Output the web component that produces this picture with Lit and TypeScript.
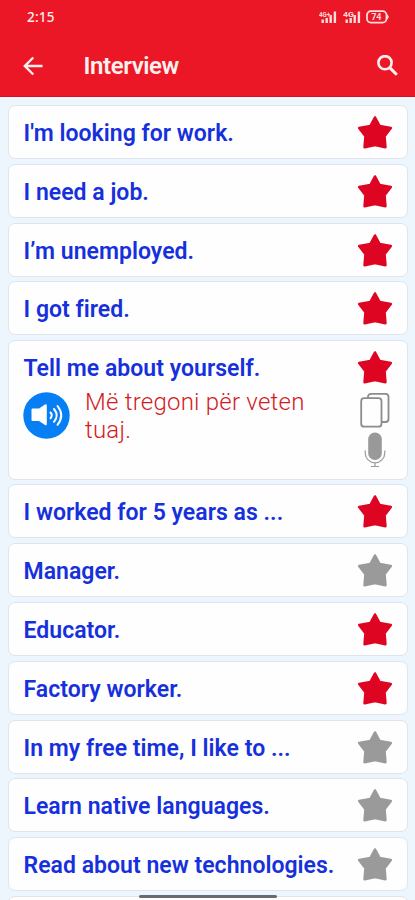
import { LitElement, html, svg, css } from "lit";
import { customElement, property } from "lit/decorators.js";
import { classMap } from "lit/directives/class-map.js";

interface Phrase {
  text: string;
  starred: boolean;
  translation?: string;
}

const PHRASES: Phrase[] = [
  { text: "I'm looking for work.", starred: true },
  { text: "I need a job.", starred: true },
  { text: "I’m unemployed.", starred: true },
  { text: "I got fired.", starred: true },
  { text: "Tell me about yourself.", starred: true, translation: "Më tregoni për veten tuaj." },
  { text: "I worked for 5 years as ...", starred: true },
  { text: "Manager.", starred: false },
  { text: "Educator.", starred: true },
  { text: "Factory worker.", starred: true },
  { text: "In my free time, I like to ...", starred: false },
  { text: "Learn native languages.", starred: false },
  { text: "Read about new technologies.", starred: false },
  { text: "", starred: false },
];

const signal = (label: string) => html`
  <svg width="18" height="14" viewBox="0 0 18 14" fill="#ffdcda">
    <text x="0" y="6.5" font-size="7" font-weight="700" textLength="11" lengthAdjust="spacingAndGlyphs">${label}</text>
    ${[
      [2.5, 9.5],
      [6.5, 8],
      [10.5, 5],
      [14.7, 1.5],
    ].map(([x, y]) => svg`<rect x=${x} y=${y} width="2.4" height=${13 - y} />`)}
  </svg>
`;

@customElement("phrase-card")
export class PhraseCard extends LitElement {
  @property({ attribute: false }) phrase!: Phrase;

  static styles = css`
    :host {
      display: block;
    }
    .card {
      box-sizing: border-box;
      display: flex;
      justify-content: space-between;
      height: 54px;
      padding: 8px 14px 0 14.5px;
      border: 1.5px solid #dfe5ea;
      border-radius: 7px;
      background: #fefefe;
    }
    .card.open {
      height: 139.5px;
    }
    .main {
      min-width: 0;
    }
    .text {
      margin-top: 6px;
      font-size: 23px;
      line-height: 28px;
      font-weight: 600;
      letter-spacing: 0.03px;
      color: #1630dc;
      white-space: nowrap;
    }
    .detail {
      display: flex;
      gap: 15px;
      margin-top: 6px;
    }
    .detail svg {
      flex: none;
      margin: 3px 0 0 -0.5px;
    }
    .translation {
      width: 240px;
      font-size: 24px;
      line-height: 28px;
      font-weight: 350;
      letter-spacing: 0.23px;
      color: #d31a22;
      margin-top: -1px;
    }
    .actions {
      display: flex;
      flex-direction: column;
      align-items: center;
      width: 36px;
      flex: none;
    }
    .actions svg {
      flex: none;
    }
    .star {
      fill: #9a9a9a;
      stroke: #9a9a9a;
    }
    .star.on {
      fill: #de0523;
      stroke: #de0523;
    }
    .copy {
      margin-top: 6.5px;
    }
    .mic {
      margin-top: 3.5px;
    }
  `;

  render() {
    const { text, starred, translation } = this.phrase;
    return html`
      <div class=${classMap({ card: true, open: !!translation })}>
        <div class="main">
          <div class="text">${text}</div>
          ${translation
            ? html`<div class="detail">
                <svg width="47" height="47" viewBox="0 0 47 47">
                  <circle cx="23.5" cy="23.5" r="23.2" fill="#067ff5" />
                  <path d="M9.5 16.5h6.5l6-4q1.8-1 1.8 1v18.5q0 2-1.8 1l-6-4h-6.5q-1 0-1-1v-10.500q0-1 1-1z" fill="#fff" />
                  <path
                    d="M27.500 20.500q2.500 2.800 0 5.800M31 17q5.400 6.400 0 12.800M34.500 14q7.500 9.400 0 18.800"
                    fill="none"
                    stroke="#fff"
                    stroke-width="2"
                    stroke-linecap="round"
                  />
                </svg>
                <div class="translation">${translation}</div>
              </div>`
            : null}
        </div>
        <div class="actions">
          <svg class=${classMap({ star: true, on: starred })} width="36" height="36" viewBox="0 0 36 36">
            <path
              d="M18 3.500L22.600 12L33.800 14L27.500 22.200L28.400 33.200L18 31L7.600 33.200L8.500 22.200L2.200 14L13.400 12Z"
              stroke-width="2.6"
              stroke-linejoin="round"
            />
          </svg>
          ${translation
            ? html`<svg class="copy" width="30" height="37" viewBox="0 0 30 37" fill="#fefefe" stroke="#8c8c8c" stroke-width="1.8">
                  <rect x="8" y="1.8" width="20.5" height="28.2" rx="3" />
                  <rect x="1.2" y="6.2" width="20.3" height="28.5" rx="3" />
                </svg>
                <svg class="mic" width="22" height="36" viewBox="0 0 22 36" fill="none" stroke="#9a9a9a">
                  <rect x="4.2" y="0.5" width="13.6" height="27.5" rx="6.8" fill="#999" stroke="none" />
                  <path d="M1.2 18.500v2.500a9.8 9.8 0 0 0 19.6 0v-2.500M11 31v3M7 34.500h8" stroke-width="1.2" />
                </svg>`
            : null}
        </div>
      </div>
    `;
  }
}

@customElement("app-root")
export class AppRoot extends LitElement {
  static styles = css`
    :host {
      display: block;
      position: relative;
      height: 900px;
      overflow: hidden;
      background: #eef6fd;
      font-family: Roboto, "Liberation Sans", sans-serif;
    }
    .header {
      height: 97px;
      background: #eb1726;
      color: #fff0ee;
      box-sizing: border-box;
      border-bottom: 1px solid #d8101f;
    }
    .status {
      display: flex;
      align-items: center;
      height: 34px;
      padding: 0 25px 0 27px;
    }
    .time {
      flex: 1;
      font-family: "Noto Sans", sans-serif;
      font-size: 13.5px;
      font-weight: 500;
      letter-spacing: 0.2px;
    }
    .icons {
      display: flex;
      align-items: center;
      gap: 5.5px;
    }
    .bar {
      display: flex;
      align-items: center;
      height: 64px;
      padding: 0 16px 0 22px;
    }
    .title {
      flex: 1;
      margin-left: 39.5px;
      font-size: 24px;
      font-weight: 600;
      letter-spacing: -0.4px;
    }
    .list {
      display: flex;
      flex-direction: column;
      gap: 4.8px;
      padding: 8px 7px 0 8px;
    }
    .handle {
      position: absolute;
      left: 139px;
      bottom: 2px;
      width: 138px;
      height: 3px;
      border-radius: 2px;
      background: #666b70;
    }
  `;

  render() {
    return html`
      <div class="header">
        <div class="status">
          <span class="time">2:15</span>
          <div class="icons">
            ${signal("4G+")}${signal("4G")}
            <svg width="24" height="14" viewBox="0 0 24 14">
              <rect x="1" y="1.2" width="19.5" height="11.4" rx="3.8" fill="none" stroke="#ffdcda" stroke-width="1.8" />
              <path d="M21.3 4.8q2 2.1 0 4.2z" fill="#ffdcda" stroke="#ffdcda" />
              <text x="5.2" y="10.3" font-size="9" font-weight="700" fill="#ffdcda">74</text>
            </svg>
          </div>
        </div>
        <div class="bar">
          <svg width="22" height="22" viewBox="0 0 22 22" fill="none" stroke="#fff0ee" stroke-width="2.4">
            <path d="M20.5 11H3.2M11.3 2.5L2.8 11l8.5 8.5" />
          </svg>
          <span class="title">Interview</span>
          <svg width="23" height="23" viewBox="0 0 23 23" fill="none" stroke="#fff0ee">
            <circle cx="9" cy="7.7" r="6.6" stroke-width="2.6" />
            <path d="M13.5 12.4l7.3 7.3" stroke-width="3" />
          </svg>
        </div>
      </div>
      <div class="list">${PHRASES.map((p) => html`<phrase-card .phrase=${p}></phrase-card>`)}</div>
      <div class="handle"></div>
    `;
  }
}
